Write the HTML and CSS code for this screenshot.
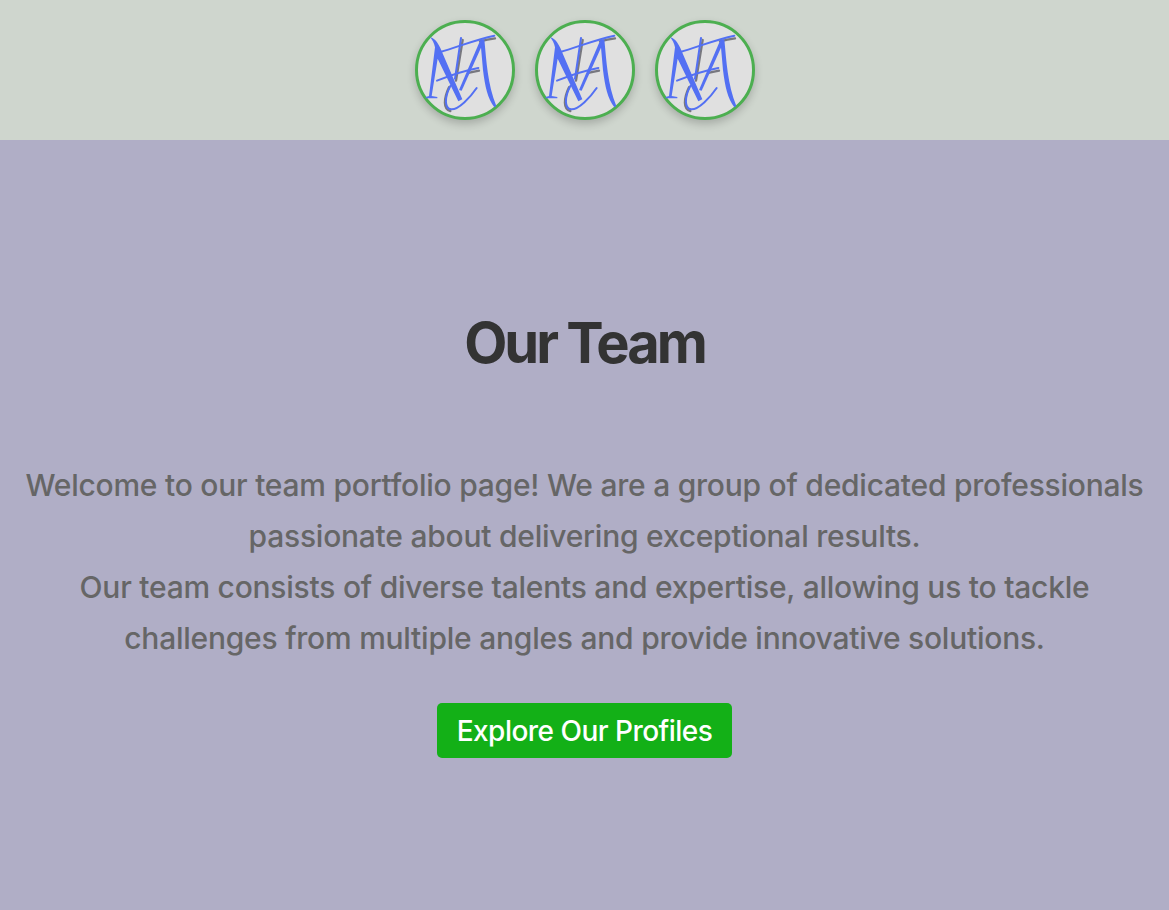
FILE: index.html
```html
<!DOCTYPE html>
<html lang="en">
<head>
  <meta charset="UTF-8">
  <meta name="viewport" content="width=device-width, initial-scale=1.0">
  <title>Our Team</title>
  <link rel="stylesheet" href="styles.css">
</head>
<body>
  <svg class="defs" width="0" height="0" aria-hidden="true">
    <symbol id="logo" viewBox="39 39 282 282">
      <!-- shadow strokes -->
      <path class="logo-shade" d="M173 90 L153 212 M132 232 C116 266 114 298 136 303 M225 94 C240 90 255 87 270 85 M190 189 C200 186 212 184 222 182"/>
      <!-- N -->
      <path class="logo-fill" d="M76 82 C90 86 98 98 106 114 L172 268 L160 274 L98 146 L80 258 L97 261 L97 265 L62 265 L62 261 L72 258 L90 112 C88 100 82 90 76 82 Z"/>
      <path class="logo-line" d="M168 84 L150 206"/>
      <!-- A -->
      <path class="logo-fill" d="M226 90 L238 88 C244 150 248 225 274 288 L268 292 C248 265 240 230 234 180 Z"/>
      <path class="logo-fill" d="M226 90 L232 104 L170 242 L162 240 Z"/>
      <!-- cross strokes -->
      <path class="logo-line" d="M106 126 C160 110 214 88 268 77"/>
      <path class="logo-line" d="M96 212 C136 196 178 182 220 174"/>
      <path class="logo-line" d="M136 228 C118 262 118 294 138 298 C160 300 196 262 215 234"/>
    </symbol>
  </svg>

  <header class="avatars">
    <div class="avatar"><svg class="avatar-logo"><use href="#logo"/></svg></div>
    <div class="avatar"><svg class="avatar-logo"><use href="#logo"/></svg></div>
    <div class="avatar"><svg class="avatar-logo"><use href="#logo"/></svg></div>
  </header>

  <main class="intro">
    <h1>Our Team</h1>
    <p>Welcome to our team portfolio page! We are a group of dedicated professionals passionate about delivering exceptional results.<br>Our team consists of diverse talents and expertise, allowing us to tackle challenges from multiple angles and provide innovative solutions.</p>
    <a class="btn" href="#">Explore Our Profiles</a>
  </main>
</body>
</html>
```

FILE: styles.css
```css
* {
  box-sizing: border-box;
}
body {
  margin: 0;
  min-height: 910px;
  display: flex;
  flex-direction: column;
  font-family: Inter, "Liberation Sans", sans-serif;
  background-color: #b0aec6;
}
.defs {
  display: none;
}
.avatars {
  display: flex;
  justify-content: center;
  gap: 20px;
  padding: 20px;
  background-color: #cfd6ce;
}
.avatar {
  width: 100px;
  height: 100px;
  border: 3px solid #4caf50;
  border-radius: 50%;
  background-color: #e0e0e0;
  box-shadow: 0 4px 8px rgba(0, 0, 0, 0.2);
}
.avatar-logo {
  display: block;
  width: 94px;
  height: 94px;
}
.logo-fill {
  fill: #5370f3;
}
.logo-line {
  fill: none;
  stroke: #5370f3;
  stroke-width: 6;
  stroke-linecap: round;
}
.logo-shade {
  fill: none;
  stroke: #55555f;
  stroke-width: 7;
  stroke-linecap: round;
  opacity: 0.75;
}
.intro {
  flex: 1;
  display: flex;
  flex-direction: column;
  align-items: center;
  justify-content: center;
  padding: 0 20px;
  text-align: center;
}
h1 {
  margin: 0 0 66px;
  font-size: 56px;
  line-height: 102px;
  font-weight: 700;
  letter-spacing: -3px;
  color: #333333;
}
p {
  margin: 0 0 39px;
  font-size: 30px;
  line-height: 51px;
  font-weight: 500;
  letter-spacing: -0.24px;
  color: #666666;
}
.btn {
  display: block;
  padding: 11px 20px 9px;
  border-radius: 5px;
  background-color: #13b017;
  color: #ffffff;
  font-size: 28px;
  line-height: 35px;
  font-weight: 500;
  letter-spacing: -0.52px;
  text-decoration: none;
}
```
